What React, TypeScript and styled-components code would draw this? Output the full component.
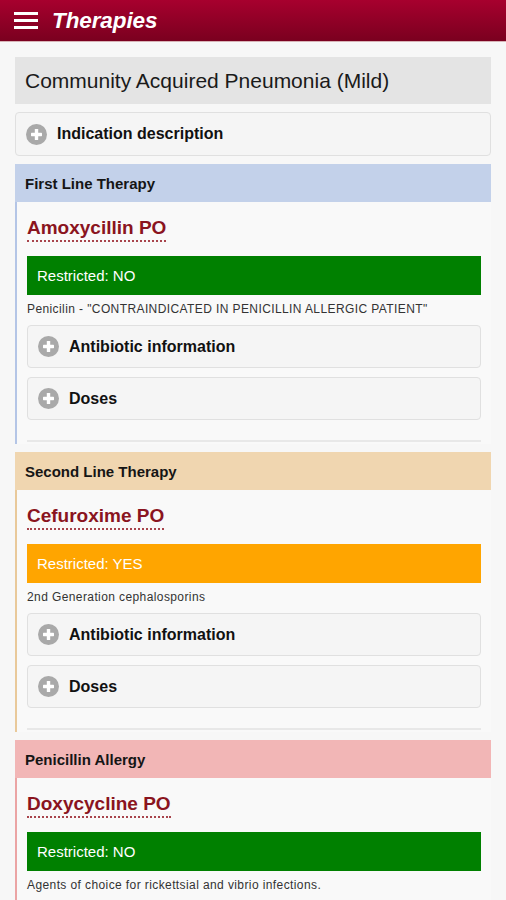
import styled, { createGlobalStyle } from "styled-components";

type Tone = "blue" | "tan" | "pink";

const tones: Record<Tone, { head: string; edge: string }> = {
  blue: { head: "#c3d1ea", edge: "#b4c5e6" },
  tan: { head: "#f0d6b0", edge: "#e9c99a" },
  pink: { head: "#f2b6b6", edge: "#eba4a4" },
};

type Drug = {
  name: string;
  restricted: boolean;
  note: string;
};

type Therapy = {
  title: string;
  tone: Tone;
  drug: Drug;
  extras: boolean;
};

const therapies: Therapy[] = [
  {
    title: "First Line Therapy",
    tone: "blue",
    drug: {
      name: "Amoxycillin PO",
      restricted: false,
      note: "Penicilin - \"CONTRAINDICATED IN PENICILLIN ALLERGIC PATIENT\"",
    },
    extras: true,
  },
  {
    title: "Second Line Therapy",
    tone: "tan",
    drug: {
      name: "Cefuroxime PO",
      restricted: true,
      note: "2nd Generation cephalosporins",
    },
    extras: true,
  },
  {
    title: "Penicillin Allergy",
    tone: "pink",
    drug: {
      name: "Doxycycline PO",
      restricted: false,
      note: "Agents of choice for rickettsial and vibrio infections.",
    },
    extras: true,
  },
];

function PlusIcon() {
  return (
    <svg width="21" height="21" viewBox="0 0 21 21">
      <circle cx="10.5" cy="10.5" r="10.5" fill="#a9a9a9" />
      <rect x="5" y="8.8" width="11" height="3.4" rx="0.6" fill="#fff" />
      <rect x="8.8" y="5" width="3.4" height="11" rx="0.6" fill="#fff" />
    </svg>
  );
}

function Collapsible(props: { label: string }) {
  return (
    <CollapsibleBox>
      <PlusIcon />
      <span>{props.label}</span>
    </CollapsibleBox>
  );
}

function TherapySection(props: { therapy: Therapy }) {
  const { therapy } = props;
  const { drug } = therapy;
  return (
    <Section>
      <SectionHead $tone={therapy.tone}>{therapy.title}</SectionHead>
      <SectionBody $tone={therapy.tone}>
        <DrugName>{drug.name}</DrugName>
        <RestrictBar $restricted={drug.restricted}>
          Restricted: {drug.restricted ? "YES" : "NO"}
        </RestrictBar>
        <Note>{drug.note}</Note>
        {therapy.extras && (
          <Stack>
            <Collapsible label="Antibiotic information" />
            <Collapsible label="Doses" />
          </Stack>
        )}
        <Divider />
      </SectionBody>
    </Section>
  );
}

export default function App() {
  return (
    <>
      <GlobalStyle />
      <Header>
        <Burger>
          <span />
          <span />
          <span />
        </Burger>
        <HeaderTitle>Therapies</HeaderTitle>
      </Header>
      <Page>
        <Heading>Community Acquired Pneumonia (Mild)</Heading>
        <TopCollapsible>
          <PlusIcon />
          <span>Indication description</span>
        </TopCollapsible>
        {therapies.map(t => (
          <TherapySection key={t.title} therapy={t} />
        ))}
      </Page>
    </>
  );
}

const GlobalStyle = createGlobalStyle`
  body {
    margin: 0;
    background: #f7f7f7;
    font-family: "Liberation Sans", Arial, sans-serif;
    color: #111;
  }
`;

const Header = styled.header`
  display: flex;
  align-items: center;
  gap: 14px;
  height: 41px;
  padding: 0 14px;
  background: linear-gradient(#a7002e, #7a001f);
  border-bottom: 1px solid #d7b3b6;
`;

const Burger = styled.div`
  display: flex;
  flex-direction: column;
  gap: 4px;
  width: 24px;
  margin-top: -1px;

  span {
    display: block;
    height: 3px;
    background: #fff;
  }
`;

const HeaderTitle = styled.h1`
  margin: 0;
  color: #fff;
  font-size: 22.5px;
  font-weight: bold;
  font-style: italic;
  letter-spacing: -0.1px;
`;

const Page = styled.main`
  display: flex;
  flex-direction: column;
  gap: 8px;
  padding: 15px 15px 0;
`;

const Heading = styled.h2`
  margin: 0;
  height: 47px;
  display: flex;
  align-items: center;
  padding: 0 10px;
  background: #e4e4e4;
  font-size: 21px;
  font-weight: normal;
  color: #1a1a1a;
`;

const CollapsibleBox = styled.div`
  display: flex;
  align-items: center;
  gap: 10px;
  height: 41px;
  padding: 0 10px;
  background: #f5f5f5;
  border: 1px solid #e0e0e0;
  border-radius: 4px;
  font-size: 16px;
  font-weight: bold;
  color: #111;
`;

const TopCollapsible = styled(CollapsibleBox)`
  height: 42px;
`;

const Section = styled.section`
  display: flex;
  flex-direction: column;
`;

const SectionHead = styled.div<{ $tone: Tone }>`
  height: 38px;
  display: flex;
  align-items: center;
  padding: 0 10px;
  background: ${p => tones[p.$tone].head};
  font-size: 15px;
  font-weight: bold;
  color: #151515;
`;

const SectionBody = styled.div<{ $tone: Tone }>`
  display: flex;
  flex-direction: column;
  align-items: flex-start;
  padding: 15px 10px 2px 10px;
  border-left: 2px solid ${p => tones[p.$tone].edge};
  background: #f9f9f9;
`;

const DrugName = styled.div`
  font-size: 19px;
  line-height: 22px;
  font-weight: bold;
  color: #8a1420;
  padding-bottom: 1px;
  border-bottom: 2px dotted #a8444c;
  margin-bottom: 14px;
`;

const RestrictBar = styled.div<{ $restricted: boolean }>`
  align-self: stretch;
  height: 39px;
  line-height: 39px;
  padding: 0 10px;
  background: ${p => (p.$restricted ? "#ffa500" : "#008000")};
  color: #fff;
  font-size: 15px;
`;

const Note = styled.p`
  margin: 7px 0 0;
  font-size: 12px;
  letter-spacing: 0.4px;
  line-height: 14px;
  color: #333;
`;

const Stack = styled.div`
  align-self: stretch;
  display: flex;
  flex-direction: column;
  gap: 9px;
  margin-top: 9px;
`;

const Divider = styled.hr`
  align-self: stretch;
  margin: 20px 0 0;
  border: none;
  height: 2px;
  background: #e8e8e8;
`;
